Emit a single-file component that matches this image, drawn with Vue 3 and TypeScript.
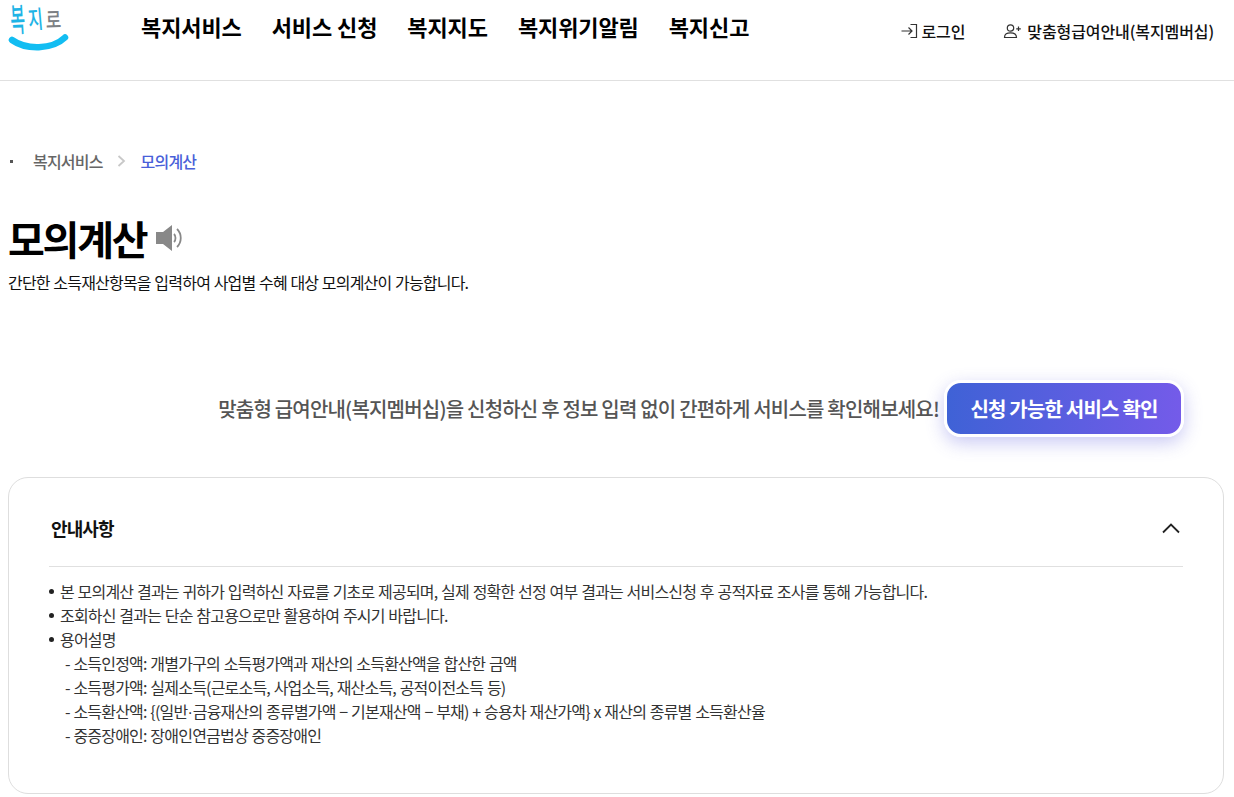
<script setup lang="ts">
interface Term { pre: string; mid?: string; post?: string }
const nav: string[] = ['복지서비스', '서비스 신청', '복지지도', '복지위기알림', '복지신고']
const notes: string[] = [
  '본 모의계산 결과는 귀하가 입력하신 자료를 기초로 제공되며, 실제 정확한 선정 여부 결과는 서비스신청 후 공적자료 조사를 통해 가능합니다.',
  '조회하신 결과는 단순 참고용으로만 활용하여 주시기 바랍니다.',
  '용어설명',
]
const terms: Term[] = [
  { pre: '- 소득인정액: 개별가구의 소득평가액과 재산의 소득환산액을 합산한 금액' },
  { pre: '- 소득평가액: 실제소득(근로소득, 사업소득, 재산소득, 공적이전소득 등)' },
  { pre: '- 소득환산액: {(일반', mid: '·', post: '금융재산의 종류별가액 − 기본재산액 − 부채) + 승용차 재산가액} x 재산의 종류별 소득환산율' },
  { pre: '- 중증장애인: 장애인연금법상 중증장애인' },
]
</script>

<template>
  <div class="page">
    <header class="header">
      <a class="logo">
        <svg width="72" height="56" viewBox="0 0 72 56">
          <text class="lg" transform="translate(11 32) rotate(-3) scale(1 2.05)" fill="#1fb4e6">복</text>
          <text class="lg" transform="translate(29 29) rotate(-5) scale(1 1.55)" fill="#1fb4e6">지</text>
          <text class="lg" transform="translate(46 28) rotate(-2) scale(1.05 1.35)" fill="#7d8185">로</text>
          <path d="M12 40 C26 50 52 50 65 37.5" fill="none" stroke="#12bdf2" stroke-width="6.5" stroke-linecap="round" />
        </svg>
      </a>
      <nav class="nav">
        <a v-for="n in nav" :key="n">{{ n }}</a>
      </nav>
      <div class="util">
        <a class="util-item login">
          <svg width="17" height="16" viewBox="0 0 17 16" fill="none" stroke="#333" stroke-width="1.2">
            <path d="M0.5 8 H11 M7.5 4.5 L11 8 L7.5 11.5" />
            <path d="M9.5 1.5 H15.5 V14.5 H9.5" />
          </svg>
          로그인
        </a>
        <a class="util-item member">
          <svg width="19" height="16" viewBox="0 0 19 16" fill="none" stroke="#333" stroke-width="1.2">
            <circle cx="7.5" cy="5" r="3.2" />
            <path d="M1.5 14.5 C1.5 11 4 9.8 7.5 9.8 C11 9.8 13.5 11 13.5 14.5 Z" />
            <path d="M15.5 3.5 V8 M13.2 5.8 H17.8" />
          </svg>
          맞춤형급여안내(복지멤버십)
        </a>
      </div>
    </header>

    <main class="main">
      <ol class="crumbs">
        <li class="dot"></li>
        <li class="c1">복지서비스</li>
        <li class="arrow">
          <svg width="9" height="12" viewBox="0 0 9 12" fill="none" stroke="#c8c8c8" stroke-width="1.8"><path d="M1.5 1 L7 6 L1.5 11" /></svg>
        </li>
        <li class="c2">모의계산</li>
      </ol>

      <div class="title-row">
        <h1>모의계산</h1>
        <svg class="speaker" width="28" height="26" viewBox="0 0 28 26">
          <path d="M0 7 H7 L16 0 V26 L7 19 H0 Z" fill="#888" />
          <path d="M18 9 C20 11 20 15 18 17 M21 4 C26 9 26 17 21 22" fill="none" stroke="#888" stroke-width="1.8" />
        </svg>
      </div>
      <p class="desc">간단한 소득재산항목을 입력하여 사업별 수혜 대상 모의계산이 가능합니다.</p>

      <div class="cta">
        <span class="cta-text">맞춤형 급여안내(복지멤버십)을 신청하신 후 정보 입력 없이 간편하게 서비스를 확인해보세요!</span>
        <button class="cta-btn">신청 가능한 서비스 확인</button>
      </div>

      <section class="card">
        <div class="card-head">
          <h2>안내사항</h2>
          <svg width="20" height="12" viewBox="0 0 20 12" fill="none" stroke="#222" stroke-width="1.8"><path d="M2 10.5 L10 2.5 L18 10.5" /></svg>
        </div>
        <ul class="notes">
          <li v-for="n in notes" :key="n">{{ n }}</li>
        </ul>
        <div class="terms">
          <p v-for="t in terms" :key="t.pre">{{ t.pre }}<span v-if="t.mid" class="mid">{{ t.mid }}</span>{{ t.post }}</p>
        </div>
      </section>
    </main>
  </div>
</template>

<style>
html, body { margin: 0; background: #fff; overflow: hidden; }
</style>

<style scoped>
.page {
  width: 1234px;
  height: 797px;
  overflow: hidden;
  font-family: "Noto Sans CJK KR", "Noto Sans", sans-serif;
  color: #111;
}
.header {
  height: 80px;
  border-bottom: 1px solid #e0e0e0;
  display: flex;
  align-items: flex-start;
}
.logo {
  width: 141px;
  flex: none;
  height: 56px;
}
.lg {
  font-family: "Liberation Sans", "Noto Sans CJK KR", sans-serif;
  font-size: 16px;
  font-weight: 500;
}
.nav {
  display: flex;
  gap: 30px;
  padding-top: 10px;
  font-size: 22px;
  font-weight: 700;
  line-height: 32px;
  letter-spacing: -0.1px;
  color: #000;
}
.util {
  margin-left: auto;
  display: flex;
  gap: 38px;
  padding: 20px 20px 0 0;
  font-size: 16px;
  font-weight: 500;
  line-height: 22px;
  letter-spacing: -0.1px;
}
.util-item { display: flex; align-items: center; gap: 5px; }
.login { gap: 3px; }
.main { padding: 0 10px 0 8px; }
.crumbs {
  list-style: none;
  margin: 0;
  padding: 69px 0 0;
  display: flex;
  align-items: center;
  height: 22px;
  font-size: 16px;
  font-weight: 500;
  letter-spacing: -0.8px;
}
.dot { width: 3px; height: 3px; background: #555; margin: 0 20px 0 2px; }
.c1 { color: #666; }
.arrow { display: flex; margin: 0 15px 0 14px; }
.c2 { color: #4a5fd9; }
.title-row {
  display: flex;
  align-items: center;
  gap: 10px;
  margin-top: 37px;
  height: 58px;
}
h1 {
  margin: 0;
  font-size: 40px;
  font-weight: 700;
  letter-spacing: -2.2px;
  color: #000;
}
.desc {
  margin: 3px 0 0;
  font-size: 16px;
  line-height: 24px;
  letter-spacing: -0.8px;
  word-spacing: 0.8px;
  color: #111;
}
.cta {
  margin-top: 86px;
  display: flex;
  justify-content: flex-end;
  align-items: center;
  gap: 5px;
  padding-right: 40px;
}
.cta-text {
  font-size: 20px;
  font-weight: 500;
  color: #555;
  letter-spacing: -0.8px;
}
.cta-btn {
  width: 240px;
  height: 57px;
  border: 3px solid #fff;
  border-radius: 17px;
  background: linear-gradient(90deg, #3f62d6, #745be9);
  box-shadow: 0 6px 18px rgba(90, 90, 220, 0.32);
  color: #fff;
  font-family: inherit;
  font-size: 20px;
  font-weight: 700;
  letter-spacing: -0.8px;
  padding: 0;
}
.card {
  margin-top: 40px;
  border: 1px solid #dedede;
  border-radius: 20px;
  padding: 0 40px 46px 40px;
}
.card-head {
  box-sizing: border-box;
  height: 89px;
  border-bottom: 1px solid #e0e0e0;
  display: flex;
  align-items: center;
  justify-content: space-between;
  padding: 12px 2px 0;
}
h2 { margin: 0; font-size: 18px; font-weight: 700; letter-spacing: -0.9px; color: #111; }
.notes {
  list-style: none;
  margin: 12px 0 0;
  padding: 0;
}
.notes li {
  position: relative;
  padding-left: 11px;
  font-size: 16px;
  line-height: 24px;
  color: #333;
  letter-spacing: -0.8px;
  word-spacing: 0.9px;
}
.notes li::before {
  content: "";
  position: absolute;
  left: 0;
  top: 10px;
  width: 5px;
  height: 5px;
  border-radius: 50%;
  background: #222;
}
.terms p {
  margin: 0;
  padding-left: 16px;
  font-size: 16px;
  line-height: 24px;
  color: #333;
  letter-spacing: -0.8px;
  word-spacing: 0.9px;
}
.mid { font-family: "Liberation Sans", sans-serif; letter-spacing: 0; line-height: 1; }
</style>
